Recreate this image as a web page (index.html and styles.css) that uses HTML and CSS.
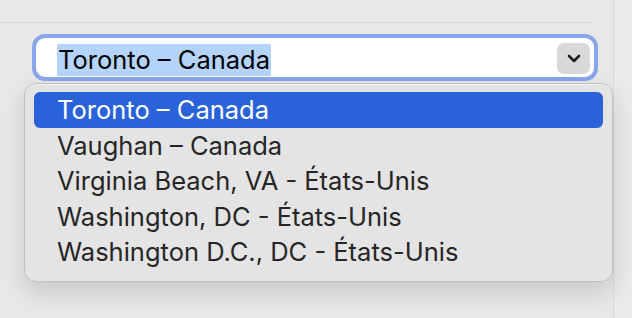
FILE: index.html
```html
<!DOCTYPE html>
<html lang="fr">
<head>
    <meta charset="UTF-8">
    <meta name="viewport" content="width=device-width, initial-scale=1.0">
    <title>Ville</title>
    <link rel="stylesheet" href="styles.css">
</head>
<body>
    <div class="window">
        <div class="pane">
            <div class="divider"></div>
            <div class="select">
                <span class="value"><span class="selected-text">Toronto – Canada</span></span>
                <span class="arrow">
                    <svg width="14" height="9" viewBox="0 0 14 9">
                        <path d="M2 2 L7 7 L12 2" fill="none" stroke="#1f1f1f" stroke-width="2.6" stroke-linecap="round" stroke-linejoin="round"/>
                    </svg>
                </span>
            </div>
            <ul class="menu">
                <li class="item active">Toronto – Canada</li>
                <li class="item">Vaughan – Canada</li>
                <li class="item">Virginia Beach, VA - États-Unis</li>
                <li class="item">Washington, DC - États-Unis</li>
                <li class="item">Washington D.C., DC - États-Unis</li>
            </ul>
        </div>
        <div class="sidebar"></div>
    </div>
</body>
</html>
```

FILE: styles.css
```css
body {
    margin: 0;
    background-color: #e8e8e8;
    font-family: Inter, "Open Sans", sans-serif;
}

.window {
    display: flex;
    height: 318px;
}

.pane {
    position: relative;
    width: 613px;
    border-right: 1px solid #d9d9d9;
    padding-top: 22px;
}

.divider {
    width: 593px;
    height: 1px;
    background-color: #d8d8d8;
}

.sidebar {
    flex: 1;
    background-color: #eaeaea;
}

.select {
    display: flex;
    align-items: center;
    justify-content: space-between;
    box-sizing: border-box;
    width: 566px;
    height: 47px;
    margin: 11px 0 0 32px;
    padding: 0 4px 0 21px;
    background-color: #fff;
    border: 4px solid #88a6ea;
    border-radius: 13px;
}

.value {
    font-size: 25.5px;
    color: #000;
}

.selected-text {
    display: inline-block;
    line-height: 32px;
    padding: 0 1px;
    margin-top: 4px;
    background-color: #b4d4fb;
}

.arrow {
    display: flex;
    align-items: center;
    justify-content: center;
    width: 33px;
    height: 31px;
    margin-top: 2px;
    background-color: #d9d9d9;
    border-radius: 7px;
}

.menu {
    position: absolute;
    left: 24px;
    top: 83px;
    box-sizing: border-box;
    width: 589px;
    height: 199px;
    margin: 0;
    padding: 8px 9px 0 9px;
    list-style: none;
    background-color: #e4e4e4;
    border: 1px solid #c2c2c2;
    border-radius: 12px;
    box-shadow: 0 10px 24px rgba(0, 0, 0, 0.14), inset 0 1px 0 rgba(255, 255, 255, 0.5);
}

.item {
    height: 35.25px;
    line-height: 35.25px;
    padding-left: 23px;
    font-size: 25.5px;
    color: #262626;
    border-radius: 6px;
}

.item.active {
    height: 36px;
    line-height: 36px;
    background-color: #2a63d9;
    color: #fff;
}
```
